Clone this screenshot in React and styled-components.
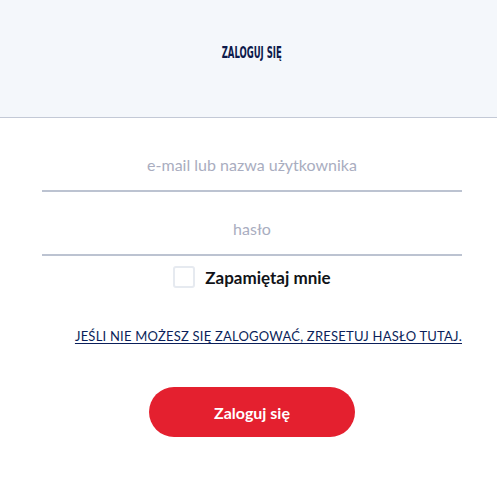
import React from "react";
import styled, { createGlobalStyle } from "styled-components";

const Global = createGlobalStyle`
  html, body { margin: 0; padding: 0; background: #ffffff; }
  body { font-family: "Noto Sans", "Lato", sans-serif; }
  * { box-sizing: border-box; }
`;

const Page = styled.div`
  width: 497px;
  height: 480px;
  background: #ffffff;
`;

const Header = styled.header`
  height: 118px;
  background: #f4f7fb;
  border-bottom: 1px solid #c3c9d6;
  display: flex;
  align-items: flex-start;
  justify-content: center;
  padding: 44px 0 0 7px;
`;

const Title = styled.h1`
  margin: 0;
  font-family: "DejaVu Sans Condensed", "DejaVu Sans", sans-serif;
  font-stretch: condensed;
  font-weight: 700;
  font-size: 15px;
  line-height: 18px;
  letter-spacing: 0;
  color: #0d1a4b;
  transform: scaleX(0.63);
`;

const Form = styled.form`
  display: flex;
  flex-direction: column;
  padding: 26px 35px 0 42px;
`;

const Field = styled.div`
  display: flex;
  flex-direction: column;
  margin-bottom: ${(p) => p.$mb || 0}px;
`;

const Input = styled.input`
  height: 48px;
  border: none;
  border-bottom: 2px solid #bcc3d1;
  background: transparent;
  text-align: center;
  font-family: "Lato", "Noto Sans", sans-serif;
  font-size: 16px;
  color: #333;
  outline: none;
  padding: 0 0 5px 0;
  &::placeholder {
    color: #a9adc0;
  }
`;

const CheckRow = styled.label`
  display: flex;
  align-items: center;
  justify-content: center;
  gap: 10px;
  margin-top: 10px;
  height: 22px;
`;

const Box = styled.span`
  width: 22px;
  height: 22px;
  border: 2px solid #e6eaf0;
  border-radius: 3px;
  background: #fff;
`;

const CheckText = styled.span`
  font-family: "Lato", "Noto Sans", sans-serif;
  font-weight: 700;
  font-size: 17px;
  color: #111318;
`;

const LinkRow = styled.div`
  display: flex;
  justify-content: flex-end;
  margin-top: 40px;
`;

const Link = styled.a`
  font-family: "Lato", "Noto Sans", sans-serif;
  font-size: 13px;
  line-height: 16px;
  letter-spacing: 0.22px;
  color: #0b1f5a;
  text-decoration: underline;
  text-underline-offset: 2px;
  cursor: pointer;
`;

const ButtonRow = styled.div`
  display: flex;
  justify-content: center;
  margin-top: 43px;
`;

const Button = styled.button`
  width: 206px;
  height: 50px;
  border: none;
  border-radius: 25px;
  background: #e4202f;
  color: #ffffff;
  font-family: "Lato", "Noto Sans", sans-serif;
  font-weight: 700;
  font-size: 16px;
  cursor: pointer;
`;

export default function App() {
  return (
    <Page>
      <Global />
      <Header>
        <Title>ZALOGUJ SIĘ</Title>
      </Header>
      <Form onSubmit={(e) => e.preventDefault()}>
        <Field $mb={16}>
          <Input type="text" placeholder="e-mail lub nazwa użytkownika" />
        </Field>
        <Field>
          <Input type="password" placeholder="hasło" />
        </Field>
        <CheckRow>
          <Box />
          <CheckText>Zapamiętaj mnie</CheckText>
        </CheckRow>
        <LinkRow>
          <Link>JEŚLI NIE MOŻESZ SIĘ ZALOGOWAĆ, ZRESETUJ HASŁO TUTAJ.</Link>
        </LinkRow>
        <ButtonRow>
          <Button type="submit">Zaloguj się</Button>
        </ButtonRow>
      </Form>
    </Page>
  );
}
